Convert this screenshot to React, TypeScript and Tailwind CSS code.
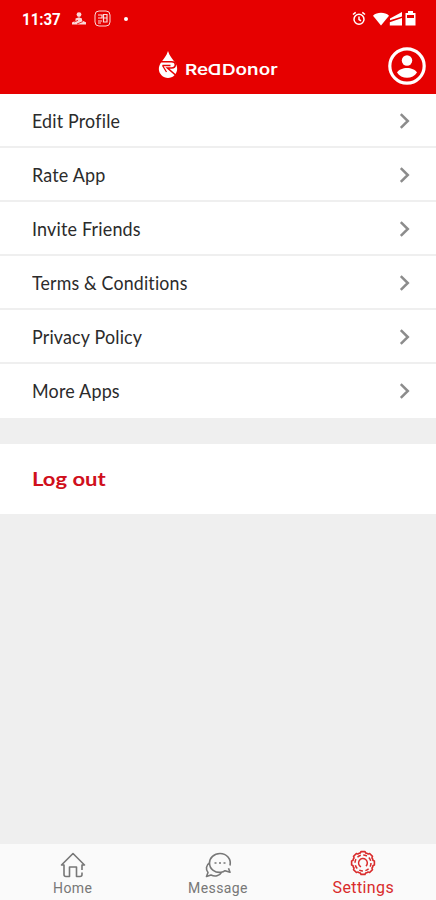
import React from 'react';
import clsx from 'clsx';

interface IMenuItem {
    label: string;
    scale: string;
}

const menuItems: IMenuItem[] = [
    { label: 'Edit Profile', scale: 'scale-x-[0.915]' },
    { label: 'Rate App', scale: 'scale-x-[0.92]' },
    { label: 'Invite Friends', scale: 'scale-x-[0.92]' },
    { label: 'Terms & Conditions', scale: 'scale-x-[0.91]' },
    { label: 'Privacy Policy', scale: 'scale-x-[0.915]' },
    { label: 'More Apps', scale: 'scale-x-[0.92]' },
];

const StatusBar: React.FC = () => (
    <div className="flex h-[37px] items-center pl-[22px] pr-[20px] text-white">
        <span className="w-[38px] origin-left scale-x-[0.94] whitespace-nowrap pt-[2px] font-['Roboto',sans-serif] text-[16px] font-bold leading-none">11:37</span>
        <svg className="ml-[11px] h-[14px] w-4 opacity-85" viewBox="0 0 16 14" fill="currentColor">
            <circle cx="8" cy="2.6" r="2.4" />
            <path d="M4.5 6.5 8 5.2l3 1.3v2l4 1.8v2.2H1v-2l3.5-1.8z" />
            <path d="m3 10 4-1.6M6 12l6-2.5" stroke="#e60000" strokeWidth=".8" />
        </svg>
        <svg className="ml-[7px] h-[17px] w-[17px] opacity-85" viewBox="0 0 17 17" fill="none" stroke="currentColor">
            <rect x="1" y="1" width="15" height="15" rx="4" />
            <path d="M4 5h4v3H4M4 11h4M9.5 4.5H13V12H9.5zM9.5 8H13M4 13h3" strokeWidth="1.2" />
        </svg>
        <span className="ml-[13px] h-1 w-1 rounded-full bg-white" />

        <svg className="ml-auto h-[15px] w-[14px]" viewBox="0 0 14 15" fill="none" stroke="currentColor" strokeWidth="1.5">
            <circle cx="7" cy="8.2" r="5" />
            <path d="M1 3.5 3.7 1.3M13 3.5l-2.7-2.2M7 5.500v3l2 1.300" />
        </svg>
        <svg className="ml-[7px] h-[14px] w-[30px]" viewBox="0 0 30 14" fill="currentColor">
            <path d="M0 3.7C4-.1 12-.1 16 3.7L8 13.500z" />
            <path d="M29 0v4.500L17 8.200V6.500zM29 6v7.500H16.800v-3.200z" />
        </svg>
        <svg className="ml-[2px] h-[15px] w-[11px]" viewBox="0 0 11 15" fill="currentColor">
            <path d="M3 0h5v2h2.500v12.500H.5V2H3zM2 4v3h7V4z" fillRule="evenodd" />
        </svg>
    </div>
);

const Logo: React.FC = () => (
    <div className="flex items-center">
        <svg className="h-[29px] w-5" viewBox="0 0 20 29">
            <path d="M10 0c1.500 5 4.500 8 7 11.500 3 4.500 3 9-.5 12.700-3.500 3.700-9.500 3.700-13 0C.2 20.800 0 16 3 11.500 5.500 8 8.500 5 10 0z" fill="#fff" />
            <path d="M2 10.800h11.500c2.500 0 3.800 1.200 3.800 3s-1.300 3.200-3.800 3.200H9.500L17.500 24" fill="none" stroke="#e60000" strokeWidth="1.600" />
            <path d="M4.500 14.500h8M4.500 14.500l4 6.500" fill="none" stroke="#e60000" strokeWidth="1.300" />
        </svg>
        <span className="ml-[7px] mt-[8px] w-[94px] origin-left scale-x-[1.26] whitespace-nowrap font-['Inter',sans-serif] text-[15px] font-semibold leading-none text-white">
            Re<span className="inline-block -scale-x-100">D</span>Donor
        </span>
    </div>
);

const Header: React.FC = () => (
    <header className="h-[94px] bg-[#e60000]">
        <StatusBar />
        <div className="flex h-[57px] items-center justify-between pl-[158px] pr-[10px]">
            <Logo />
            <svg className="h-[38px] w-[38px]" viewBox="0 0 38 38">
                <circle cx="19" cy="19" r="17.200" fill="none" stroke="#fff" strokeWidth="3.200" />
                <circle cx="19" cy="13.500" r="5.200" fill="#fff" />
                <path d="M9 25.500C12.500 19.500 25.500 19.500 29 25.500 25 32.500 13 32.500 9 25.500z" fill="#fff" />
            </svg>
        </div>
    </header>
);

const MenuRow: React.FC<{ item: IMenuItem; last: boolean }> = ({ item, last }) => (
    <button className={clsx('flex h-[54px] w-full items-center justify-between border-b-2 bg-white pl-8 pr-[25px]', last ? 'border-white' : 'border-[#efefef]')}>
        <span className={clsx("mt-[2px] origin-left whitespace-nowrap font-['Lato',sans-serif] text-[19.5px] tracking-[0.2px] text-[#2b2b2b] [font-variant-ligatures:none]", item.scale)}>
            {item.label}
        </span>
        <svg className="mt-[2px] h-4 w-3" viewBox="0 0 12 16" fill="none" stroke="#8c8c8c" strokeWidth="2.5">
            <path d="m1.8 1.2 7 6.8-7 6.8" />
        </svg>
    </button>
);

const HomeIcon = () => (
    <svg className="h-7 w-7" viewBox="0 0 28 28" fill="none" stroke="currentColor" strokeWidth="1.6" strokeLinejoin="round">
        <path d="M23 19v-5h2.500L14 2.500 2.500 14H5v9.500c0 1.500.5 2 2 2h3.500V16h7v9.500H21c1.500 0 2-.5 2-2v-2" />
    </svg>
);

const MessageIcon = () => (
    <svg className="h-7 w-7" viewBox="0 0 28 28" fill="none" stroke="currentColor" strokeWidth="1.6" strokeLinejoin="round">
        <path d="M26 14.500C27.500 8 22.500 2.500 16 2.500 10 2.500 5.500 6.800 5.500 12c0 6.500 6 10 11.500 9.300 1.700-.2 3-.8 4-1.600l5 1.600-1.500-4" />
        <path d="M5.500 12C2 14 1.500 18.500 4 21.500l-1.500 4 4.500-1.500c4 2 8.500 1 10.500-2.700" />
        <path d="M10.500 12h2M15 12h2M19.500 12h2" />
    </svg>
);

const SettingsIcon = () => (
    <svg className="h-7 w-7" viewBox="0 0 28 28" fill="none" stroke="currentColor" strokeLinejoin="round">
        {[0, 45, 90, 135, 180, 225, 270, 315].map(angle => (
            <path key={angle} d="M9.700 3.900C11 4.800 11.500 4 12 2.600h4c.5 1.400 1 2.200 2.300 1.300" strokeWidth="1.600" transform={`rotate(${angle} 14 14)`} />
        ))}
        <circle cx="14" cy="14" r="8" strokeWidth="1.500" strokeDasharray="3.800 2.483" />
        <path d="M12 17.900a4.400 4.400 0 1 1 5 -.8" strokeWidth="1.500" />
    </svg>
);

const TabBar: React.FC = () => (
    <nav className="grid h-14 grid-cols-3 bg-[#fafafa] font-['Roboto',sans-serif] text-[14px] leading-4 text-[#777]">
        <button className="flex flex-col items-center pt-[7px]">
            <HomeIcon />
            <span className="mt-px tracking-[0.4px]">Home</span>
        </button>
        <button className="flex flex-col items-center pt-[7px]">
            <MessageIcon />
            <span className="mt-px tracking-[0.4px]">Message</span>
        </button>
        <button className="flex flex-col items-center pt-[5px] text-[#d92b2b]">
            <SettingsIcon />
            <span className="mt-[3px] text-[16px] tracking-[0.4px]">Settings</span>
        </button>
    </nav>
);

const App: React.FC = () => {
    return (
        <div className="flex h-[900px] w-[436px] flex-col overflow-hidden bg-[#efefef]">
            <Header />

            <main className="flex-1">
                {menuItems.map((item, i) => (
                    <MenuRow key={item.label} item={item} last={i === menuItems.length - 1} />
                ))}

                <button className="mt-[26px] flex h-[70px] w-full items-center bg-white pl-8">
                    <span className="origin-left scale-x-[1.13] whitespace-nowrap font-['Lato',sans-serif] text-[19.5px] font-bold text-[#d0101c]">Log out</span>
                </button>
            </main>

            <TabBar />
        </div>
    );
};

export default App;
